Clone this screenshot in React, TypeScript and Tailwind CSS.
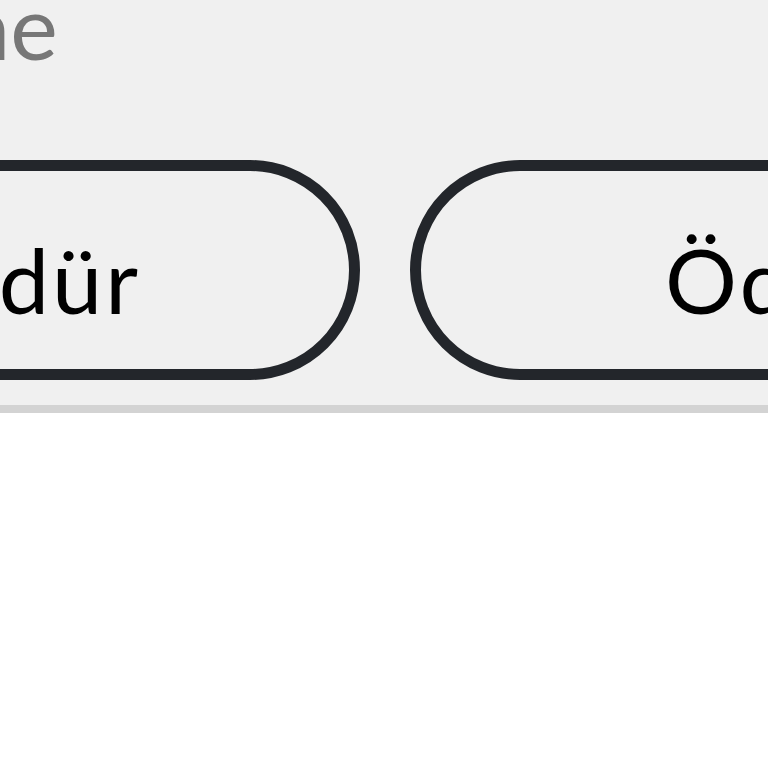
import React from 'react';

export default function App() {
  return (
    <div className="w-[768px] h-[768px] overflow-hidden bg-white" style={{ fontFamily: 'Lato, "Noto Sans", sans-serif' }}>
      <div className="h-[413px] bg-[#f0f0f0] border-b-[8px] border-[#d3d3d3] flex flex-col">
        {/* field label, clipped at the left edge */}
        <div className="h-[160px] flex justify-start">
          <span className="ml-[-40px] mt-[-20px] text-[90px] leading-[90px] text-[#777777] whitespace-nowrap">ne</span>
        </div>

        {/* action buttons */}
        <div className="flex gap-[50px] ml-[-300px]">
          <button className="w-[660px] h-[220px] shrink-0 rounded-full border-[11px] border-[#23262b] flex items-center justify-end pr-[208px] pt-[18px] text-[90px] tracking-[3px] text-black whitespace-nowrap">
            döndür
          </button>
          <button className="w-[660px] h-[220px] shrink-0 rounded-full border-[11px] border-[#23262b] flex items-center justify-start pl-[244px] pt-[18px] text-[90px] tracking-[3px] text-black whitespace-nowrap">
            Ödeme
          </button>
        </div>
      </div>
    </div>
  );
}
